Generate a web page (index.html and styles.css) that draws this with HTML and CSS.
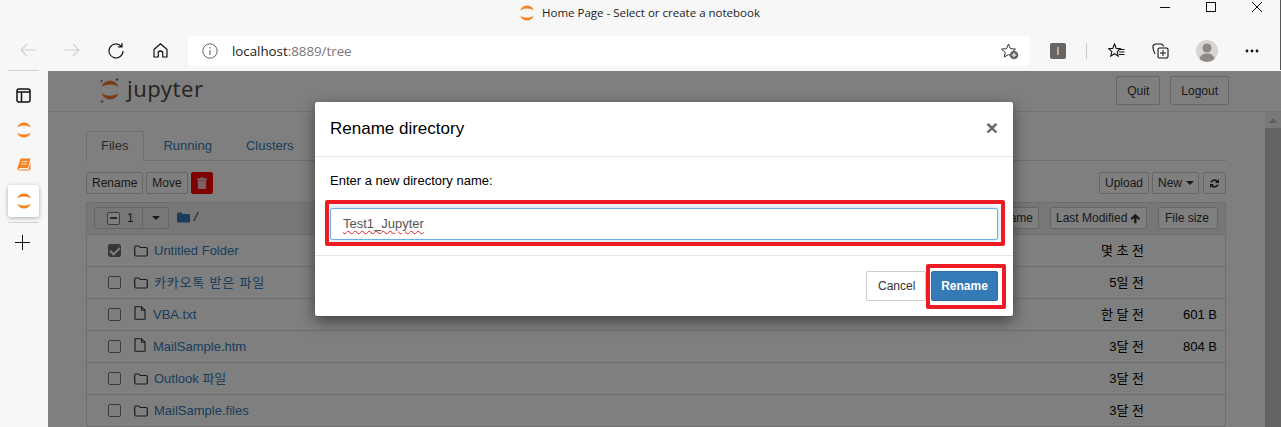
FILE: index.html
```html
<!DOCTYPE html>
<html lang="en">
<head>
<meta charset="utf-8">
<title>Home Page - Select or create a notebook</title>
<link rel="stylesheet" href="styles.css">
</head>
<body>
<svg class="defs" width="0" height="0" aria-hidden="true">
  <symbol id="jup" viewBox="0 0 20 20"><path d="M1.500 7C4-1.500 16-1.500 18.500 7 15 3.500 5 3.500 1.500 7Z"/><path d="M1.500 13C4 21.500 16 21.500 18.500 13 15 16.500 5 16.500 1.500 13Z"/></symbol>
  <symbol id="folder" viewBox="0 0 14 12"><path d="M.7 2.200Q.7 1 1.900 1H5L6.200 2.500H12.100Q13.300 2.500 13.300 3.700V9.800Q13.300 11 12.100 11H1.900Q.7 11 .7 9.800Z" fill="none" stroke="currentColor" stroke-width="1.200"/></symbol>
  <symbol id="file" viewBox="0 0 12 14"><path d="M1 .7H7.500L11 4.200V13.300H1ZM7.500.7V4.200H11" fill="none" stroke="currentColor" stroke-width="1.100"/></symbol>
</svg>

<header class="chrome">
  <div class="titlebar">
    <div class="title"><svg class="tab-logo"><use href="#jup"/></svg><span>Home Page - Select or create a notebook</span></div>
    <div class="winctl">
      <svg width="10" height="10" viewBox="0 0 10 10"><path d="M0 5.500H10" stroke="#111"/></svg>
      <svg width="10" height="10" viewBox="0 0 10 10"><rect x=".5" y=".5" width="9" height="9" fill="none" stroke="#111"/></svg>
      <svg width="10" height="10" viewBox="0 0 10 10"><path d="M0 0L10 10M10 0L0 10" stroke="#111"/></svg>
    </div>
  </div>
  <div class="toolbar">
    <svg class="tb back" width="16" height="14" viewBox="0 0 16 14"><path d="M16 7H1M7 1L1 7L7 13" fill="none" stroke="#d0d0d0" stroke-width="1.100"/></svg>
    <svg class="tb fwd" width="16" height="14" viewBox="0 0 16 14"><path d="M0 7H15M9 1L15 7L9 13" fill="none" stroke="#d0d0d0" stroke-width="1.100"/></svg>
    <svg class="tb reload" width="16" height="16" viewBox="0 0 16 16"><path d="M13.300 3.400A7 7 0 1 0 15 8M14 0V3.900H10" fill="none" stroke="#111" stroke-width="1.200"/></svg>
    <svg class="tb home" width="15" height="15" viewBox="0 0 15 15"><path d="M1 6.500L7.500 .8L14 6.500V14H9.700V9Q7.500 7 5.300 9V14H1Z" fill="none" stroke="#111" stroke-width="1.200" stroke-linejoin="round"/></svg>
    <div class="urlbar">
      <svg class="info" width="16" height="16" viewBox="0 0 16 16"><circle cx="8" cy="8" r="7.200" fill="none" stroke="#666"/><path d="M8 7V12M8 4V5.500" stroke="#666" stroke-width="1.100"/></svg>
      <span class="url">localhost<span class="url-dim">:8889/tree</span></span>
      <svg class="star-add" width="18" height="17" viewBox="0 0 18 17"><path d="M7.500 1L9.500 5.700L14.500 6.100L10.700 9.400L11.800 14L7.500 11.600L3.200 14L4.300 9.400L.5 6.100L5.500 5.700Z" fill="none" stroke="#333"/><circle cx="13" cy="12" r="4.300" fill="#666"/><path d="M13 9.800V14.200M10.800 12H15.200" stroke="#fff"/></svg>
    </div>
    <div class="ext">I</div>
    <div class="sep"></div>
    <svg class="fav" width="17" height="16" viewBox="0 0 17 16"><path d="M6.500 1L8.300 5.400L12.300 5.700L9.200 8.600L10.200 13L6.500 10.700L2.800 13L3.800 8.600L.7 5.700L4.700 5.400Z" fill="none" stroke="#111" stroke-width="1.100"/><path d="M11 6.500H16.500M11 9H16.500M11 11.500H16.500" stroke="#111"/></svg>
    <svg class="coll" width="17" height="16" viewBox="0 0 17 16"><path d="M3 11Q.5 6 1 3Q1.500 1 4 1H9Q11 1 11.500 3.500" fill="none" stroke="#111" stroke-width="1.100"/><rect x="6" y="5" width="10" height="10" rx="1.500" fill="#f7f7f7" stroke="#111" stroke-width="1.100"/><path d="M11 7V13M8 10H14" stroke="#111"/></svg>
    <svg class="avatar" width="22" height="22" viewBox="0 0 22 22"><circle cx="11" cy="11" r="11" fill="#d8d4d2"/><circle cx="11" cy="8" r="4.500" fill="#8d8986"/><path d="M3.500 19Q4.500 13.500 11 13.500Q17.500 13.500 18.500 19Q15 22 11 22Q7 22 3.500 19Z" fill="#8d8986"/></svg>
    <div class="dots"><i></i><i></i><i></i></div>
  </div>
</header>

<div class="workspace">
  <aside class="sidebar">
    <svg class="side-panel" width="15" height="15" viewBox="0 0 15 15"><rect x="1" y="1" width="13" height="13" rx="2" fill="none" stroke="#111" stroke-width="1.500"/><path d="M1 4H14M5.500 4V14" stroke="#111" stroke-width="1.500"/></svg>
    <svg class="side-jup"><use href="#jup"/></svg>
    <svg class="side-book" width="14" height="13" viewBox="0 0 14 13"><path d="M3.500 .5H13.500L11 10H2.500Q1.500 10 2 11Q2.500 12 3.500 11.500H11.500L13.500 4V11L12 12.500H2.500Q.5 12.500 .5 10.500Q.5 10 1 8.500Z" fill="#f58220"/><path d="M4.500 3.500H10.500M4 6H10" stroke="#fff" stroke-width=".8"/></svg>
    <div class="side-active"><svg class="side-jup flat"><use href="#jup"/></svg></div>
    <div class="side-line"></div>
    <svg class="side-plus" width="15" height="15" viewBox="0 0 15 15"><path d="M7.500 0V15M0 7.500H15" stroke="#111"/></svg>
  </aside>

  <main class="page">
    <div class="nav">
      <svg class="logo" viewBox="0 0 22 27" width="22" height="27">
        <use href="#jup" x="1" y="3" width="20" height="20" fill="#f37726"/>
        <circle cx="18" cy="2.500" r="1.300" fill="#767677"/><circle cx="2.500" cy="4" r=".9" fill="#616262"/><circle cx="3" cy="24.500" r="1.600" fill="#9e9e9e"/>
      </svg>
      <span class="logo-text">jupyter</span>
      <button class="btn nav-btn quit">Quit</button>
      <button class="btn nav-btn">Logout</button>
    </div>

    <div class="page-body">
      <div class="content">
        <div class="tabs">
          <div class="tab active">Files</div>
          <div class="tab">Running</div>
          <div class="tab">Clusters</div>
        </div>
        <div class="actions">
          <button class="btn xs">Rename</button>
          <button class="btn xs">Move</button>
          <button class="btn xs danger"><svg width="10" height="12" viewBox="0 0 10 12"><path d="M3.500 .5H6.500L7 1.500H10V3H0V1.500H3ZM1 3.500H9V11Q9 12 8 12H2Q1 12 1 11ZM3 5V10.500M5 5V10.500M7 5V10.500" fill="#f4c6d2" stroke="#f4c6d2" stroke-width=".2"/></svg></button>
          <button class="btn xs upload">Upload</button>
          <button class="btn xs new">New <i class="caret"></i></button>
          <button class="btn xs icon"><svg width="11" height="11" viewBox="0 0 11 11"><path d="M1.300 4.500A4.300 4.300 0 0 1 8.500 2.500L10 1V5H6L7.300 3.700A2.700 2.700 0 0 0 3 4.500ZM9.700 6.500A4.300 4.300 0 0 1 2.500 8.500L1 10V6H5L3.700 7.300A2.700 2.700 0 0 0 8 6.500Z" fill="#333"/></svg></button>
        </div>
        <div class="list">
          <div class="list-head">
            <div class="select-group">
              <div class="select-count"><span class="cb minus"></span><span>1</span></div>
              <div class="select-drop"><i class="caret"></i></div>
            </div>
            <svg class="crumb" width="13" height="11" viewBox="0 0 13 11"><path d="M0 1.500Q0 .5 1 .5H4.500L5.700 2H12Q13 2 13 3V9.500Q13 10.500 12 10.500H1Q0 10.500 0 9.500Z" fill="#337ab7"/></svg>
            <span class="crumb-slash">/</span>
            <div class="sorts">
              <button class="btn xs">Name</button>
              <button class="btn xs sort-modified">Last Modified <svg width="11" height="11" viewBox="0 0 11 11"><path d="M5.500 .5L10.500 5.500L9 7L6.700 4.700V10.500H4.300V4.700L2 7L.5 5.500Z" fill="#333"/></svg></button>
              <button class="btn xs sort-size">File size</button>
            </div>
          </div>
          <div class="row"><span class="cb checked"></span><svg class="ficon"><use href="#folder"/></svg><a class="name">Untitled Folder</a><span class="time">몇 초 전</span><span class="size"></span></div>
          <div class="row"><span class="cb"></span><svg class="ficon"><use href="#folder"/></svg><a class="name ko">카카오톡 받은 파일</a><span class="time">5일 전</span><span class="size"></span></div>
          <div class="row"><span class="cb"></span><svg class="ficon doc"><use href="#file"/></svg><a class="name">VBA.txt</a><span class="time">한 달 전</span><span class="size">601 B</span></div>
          <div class="row"><span class="cb"></span><svg class="ficon doc"><use href="#file"/></svg><a class="name">MailSample.htm</a><span class="time">3달 전</span><span class="size">804 B</span></div>
          <div class="row"><span class="cb"></span><svg class="ficon"><use href="#folder"/></svg><a class="name">Outlook 파일</a><span class="time">3달 전</span><span class="size"></span></div>
          <div class="row"><span class="cb"></span><svg class="ficon"><use href="#folder"/></svg><a class="name">MailSample.files</a><span class="time">3달 전</span><span class="size"></span></div>
        </div>
      </div>
      <div class="scrollbar"><div class="scroll-up"><i></i></div><div class="scroll-thumb"></div></div>
    </div>

    <div class="backdrop"></div>
    <div class="modal">
      <div class="modal-head"><h4>Rename directory</h4><span class="close">×</span></div>
      <div class="modal-body">
        <p>Enter a new directory name:</p>
        <div class="field"><span class="squiggle">Test1_Jupyter</span><div class="mark mark-field"></div></div>
      </div>
      <div class="modal-foot">
        <button class="btn md">Cancel</button>
        <button class="btn md primary">Rename<div class="mark mark-btn"></div></button>
      </div>
    </div>
  </main>
</div>
</body>
</html>
```

FILE: styles.css
```css
* { box-sizing: border-box; }
html, body { margin: 0; height: 427px; overflow: hidden; }
body {
  width: 1281px;
  background: #f7f7f7;
  font: 13px/18px "Liberation Sans", "Noto Sans CJK KR", sans-serif;
  color: #000;
  display: flex;
  flex-direction: column;
}
.defs { position: absolute; }
button { font: inherit; margin: 0; }

/* browser chrome */
.chrome { height: 70px; flex: none; display: flex; flex-direction: column; border-right: 1px solid #555; }
.titlebar { height: 36px; position: relative; display: flex; justify-content: center; }
.title { display: flex; align-items: center; height: 25px; gap: 7px; margin-left: -1px; font: 11.500px "Open Sans", sans-serif; color: #222; }
.tab-logo { width: 16px; height: 16px; fill: #f58220; }
.winctl { position: absolute; right: 18px; top: 2px; display: flex; gap: 36px; }
.toolbar { height: 34px; display: flex; align-items: flex-start; }
.tb { flex: none; margin-top: 7px; }
.back { margin-left: 20px; }
.fwd { margin-left: 28px; }
.reload { margin-left: 28px; }
.home { margin-left: 29px; margin-top: 7px; }
.urlbar { width: 842px; height: 30px; margin-left: 20px; background: #fff; border-radius: 4px; display: flex; align-items: center; padding: 0 11px 0 14px; }
.url { margin-left: 14px; font: 13.300px "Open Sans", sans-serif; color: #222; }
.url-dim { color: #777; }
.star-add { margin-left: auto; }
.ext { width: 16px; height: 16px; margin: 7px 0 0 20px; background: #666; color: #fff; border-radius: 2px; font: 10px/16px "Open Sans", sans-serif; text-align: center; }
.sep { width: 1px; height: 16px; margin: 7px 0 0 20px; background: #ccc; }
.fav { margin: 7px 0 0 21px; }
.coll { margin: 7px 0 0 27px; }
.avatar { margin: 4px 0 0 27px; }
.dots { margin: 14px 0 0 28px; display: flex; gap: 3px; }
.dots i { width: 2px; height: 2px; background: #111; border-radius: 50%; box-shadow: 0 0 0 .4px #111; }

/* workspace */
.workspace { flex: 1; display: flex; min-height: 0; }
.sidebar { width: 48px; flex: none; display: flex; flex-direction: column; align-items: center; border-top: 1px solid transparent; position: relative; }
.sidebar::before { content: ""; position: absolute; left: 8px; top: -1px; width: 31px; height: 1px; background: #d2d2d2; }
.side-panel { margin-top: 17px; margin-left: -2px; flex: none; }
.side-jup { width: 16px; height: 16px; fill: #f58220; margin-top: 19px; flex: none; }
.side-jup.flat { margin: 0; }
.side-book { margin-top: 20px; flex: none; }
.side-active { width: 31px; height: 32px; margin-top: 14px; margin-left: -1px; background: #fff; border-radius: 3px; box-shadow: 0 1px 4px rgba(0,0,0,.3); display: flex; align-items: center; justify-content: center; flex: none; }
.side-line { width: 31px; height: 1px; margin-top: 5px; margin-left: -1px; background: #d2d2d2; flex: none; }
.side-plus { margin-top: 12px; margin-left: -3px; flex: none; }

/* notebook page */
.page { flex: 1; position: relative; background: #fff; color: #000; overflow: hidden; border-top: 1px solid #f7f7f7; }
.nav { height: 41px; display: flex; align-items: flex-start; padding: 5px 52px 0 51px; border-bottom: 1px solid #e7e7e7; }
.logo { flex: none; margin-top: 1px; }
.logo-text { margin: -3px 0 0 6px; font: 22px/30px "Noto Sans", sans-serif; color: #4e4e4e; letter-spacing: .5px; }
.btn { background: #fff; border: 1px solid #ccc; border-radius: 2px; color: #333; padding: 0; white-space: nowrap; }
.nav-btn { height: 29px; padding: 0 10px; font-size: 12px; }
.quit { margin-left: auto; margin-right: 10px; }
.page-body { display: flex; height: 315px; }
.content { width: 1140px; margin-left: 38px; flex: none; }
.scrollbar { width: 16px; margin-left: auto; flex: none; background: #f1f1f1; display: flex; flex-direction: column; }
.scroll-up { height: 16px; display: flex; justify-content: center; padding-top: 6px; }
.scroll-up i { border: 4px solid transparent; border-top: 0; border-bottom: 5px solid #bbb; width: 0; height: 0; }
.scroll-thumb { flex: 1; background: #c8c8c8; }

.tabs { display: flex; margin-top: 19px; height: 30px; border-bottom: 1px solid #ddd; }
.tab { height: 29px; padding: 5px 15px 0; margin-right: 2px; color: #337ab7; border: 1px solid transparent; }
.tab.active { height: 30px; padding: 5px 15px 0 14px; color: #555; background: #fff; border-color: #ddd; border-bottom-color: #fff; border-radius: 2px 2px 0 0; margin-right: 3px; }
.actions { display: flex; gap: 3px; margin-top: 11px; height: 22px; }
.xs { height: 22px; padding: 0 5px; font-size: 12px; line-height: 18px; display: inline-flex; align-items: center; gap: 4px; }
.danger { width: 22px; justify-content: center; background: #f00; border-color: #f00; padding: 0; }
.upload { margin-left: auto; width: 50px; justify-content: center; }
.new { width: 47px; }
.icon { width: 23px; justify-content: center; padding: 0; margin-left: 1px; }
.caret { display: inline-block; width: 0; height: 0; border: 4px solid transparent; border-bottom: 0; border-top: 4px solid #333; }

.list { margin-top: 8px; border: 1px solid #ddd; border-bottom: 0; }
.list-head { height: 32px; background: #eee; border-bottom: 1px solid #ddd; display: flex; align-items: center; padding: 0 7px; }
.select-group { display: flex; height: 22px; width: 75px; margin-bottom: 1px; border: 1px solid #ccc; border-radius: 2px; background: #eee; }
.select-count { flex: 1; display: flex; align-items: center; gap: 7px; padding-left: 12px; color: #333; font-size: 12px; border-right: 1px solid #ccc; }
.select-drop { width: 25px; display: flex; align-items: center; justify-content: center; }
.crumb { margin: 0 4px 3px 8px; flex: none; }
.crumb-slash { color: #333; margin-bottom: 3px; font-style: italic; }
.sorts { margin-left: auto; display: flex; gap: 11px; margin-bottom: 1px; }
.sort-modified { width: 97px; gap: 3px; }
.sort-size { width: 60px; padding-left: 6px; }
.row { height: 32px; border-bottom: 1px solid #ddd; display: flex; align-items: center; padding-left: 21px; }
.cb { width: 13px; height: 13px; flex: none; border: 1px solid #767676; border-radius: 2px; background: #fff; position: relative; }
.cb.checked { background: #6f6f6f; border-color: #6f6f6f; }
.cb.checked::after { content: ""; position: absolute; left: 3px; top: 0; width: 4px; height: 8px; border: solid #fff; border-width: 0 2px 2px 0; transform: rotate(45deg); }
.cb.minus::after { content: ""; position: absolute; left: 2px; top: 4px; width: 7px; height: 2px; background: #555; }
.ficon { width: 14px; height: 12px; margin: 0 6px 0 13px; flex: none; color: #333; }
.ficon.doc { width: 12px; height: 14px; margin: -3px 7px 0 13px; }
.name { color: #337ab7; font-size: 13px; }
.name.ko { letter-spacing: .8px; }
.time { margin-left: auto; width: 60px; text-align: right; color: #000; }
.size { width: 81px; text-align: right; color: #000; padding-right: 8px; font-size: 13px; }

/* modal */
.backdrop { position: absolute; inset: 0; background: rgba(0,0,0,.5); }
.modal { position: absolute; left: 267px; top: 31px; width: 698px; height: 214px; background: #fff; border-radius: 2px; box-shadow: 0 5px 15px rgba(0,0,0,.5); display: flex; flex-direction: column; }
.modal-head { height: 55px; border-bottom: 1px solid #e5e5e5; display: flex; align-items: center; justify-content: space-between; padding: 0 15px; }
h4 { margin: 0; font-size: 17px; font-weight: 400; color: #000; }
.close { font-size: 21px; font-weight: 700; color: #666; margin-top: -3px; }
.modal-body { height: 99px; border-bottom: 1px solid #e5e5e5; padding: 15px; }
p { margin: 0 0 18px; font-size: 13px; line-height: 18px; color: #000; }
.field { position: relative; height: 32px; border: 1px solid #66afe9; border-radius: 2px; box-shadow: 0 0 8px rgba(102,175,233,.5); padding: 6px 12px; color: #555; font-size: 13px; }
.squiggle { text-decoration: underline wavy #e02020 1px; text-underline-offset: 2px; }
.mark { position: absolute; border: 4px solid #ed1c24; border-radius: 2px; pointer-events: none; }
.mark-field { left: -6px; right: -8px; top: -9px; bottom: -7px; }
.modal-foot { flex: 1; display: flex; justify-content: flex-end; align-items: flex-start; gap: 5px; padding: 15px 15px 0 0; }
.md { height: 30px; padding: 0 11px; font-size: 12px; position: relative; width: 60px; }
.primary { width: 67px; padding: 0; background: #337ab7; border-color: #2e6da4; color: #fff; font-weight: 700; }
.mark-btn { left: -6px; right: -9px; top: -8px; bottom: -9px; }
```
